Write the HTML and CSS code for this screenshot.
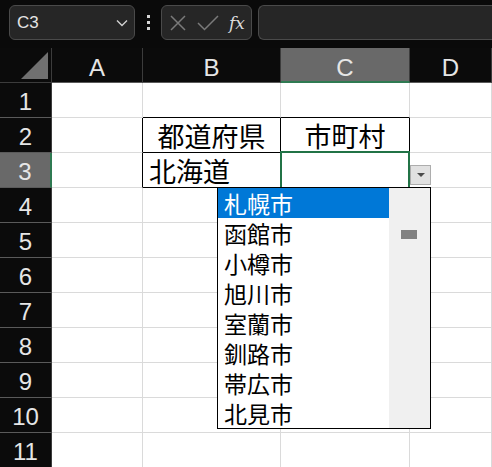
FILE: index.html
```html
<!DOCTYPE html>
<html lang="ja">
<head>
    <meta charset="UTF-8">
    <title>Book1 - Excel</title>
    <link rel="stylesheet" href="styles.css">
</head>
<body>
    <div class="app">
        <!-- name box + formula bar -->
        <div class="toolbar">
            <div class="name-box">
                <span>C3</span>
                <svg class="chevron" width="12" height="8" viewBox="0 0 12 8"><path d="M1 1.5 L6 6.5 L11 1.5" fill="none" stroke="#d0d0d0" stroke-width="1.4"/></svg>
            </div>
            <div class="kebab"><i></i><i></i><i></i></div>
            <div class="fx-buttons">
                <svg width="18" height="18" viewBox="0 0 18 18"><path d="M2 2 L16 16 M16 2 L2 16" stroke="#7a7a7a" stroke-width="1.5"/></svg>
                <svg width="22" height="18" viewBox="0 0 22 18"><path d="M1 9 L7.5 15.5 L21 2" fill="none" stroke="#7a7a7a" stroke-width="1.5"/></svg>
                <span class="fx">fx</span>
            </div>
            <div class="formula-input"></div>
        </div>

        <!-- sheet grid -->
        <div class="sheet">
            <div class="corner"><svg width="28" height="27" viewBox="0 0 28 27"><path d="M27 0 L27 27 L0 27 Z" fill="#707070"/></svg></div>
            <div class="col-head">A</div>
            <div class="col-head">B</div>
            <div class="col-head active">C</div>
            <div class="col-head">D</div>

            <div class="row-head">1</div>
            <div class="cell"></div>
            <div class="cell edge-bottom"></div>
            <div class="cell edge-bottom"></div>
            <div class="cell"></div>

            <div class="row-head">2</div>
            <div class="cell edge-right"></div>
            <div class="cell boxed center">都道府県</div>
            <div class="cell boxed center">市町村</div>
            <div class="cell"></div>

            <div class="row-head active">3</div>
            <div class="cell edge-right"></div>
            <div class="cell boxed">北海道</div>
            <div class="cell boxed selected"></div>
            <div class="cell"></div>

            <div class="row-head">4</div>
            <div class="cell"></div><div class="cell"></div><div class="cell"></div><div class="cell"></div>
            <div class="row-head">5</div>
            <div class="cell"></div><div class="cell"></div><div class="cell"></div><div class="cell"></div>
            <div class="row-head">6</div>
            <div class="cell"></div><div class="cell"></div><div class="cell"></div><div class="cell"></div>
            <div class="row-head">7</div>
            <div class="cell"></div><div class="cell"></div><div class="cell"></div><div class="cell"></div>
            <div class="row-head">8</div>
            <div class="cell"></div><div class="cell"></div><div class="cell"></div><div class="cell"></div>
            <div class="row-head">9</div>
            <div class="cell"></div><div class="cell"></div><div class="cell"></div><div class="cell"></div>
            <div class="row-head">10</div>
            <div class="cell"></div><div class="cell"></div><div class="cell"></div><div class="cell"></div>
            <div class="row-head">11</div>
            <div class="cell"></div><div class="cell"></div><div class="cell"></div><div class="cell"></div>
        </div>

        <!-- data validation dropdown -->
        <div class="dd-button"><i></i></div>
        <div class="dd-list">
            <ul class="dd-items">
                <li class="picked">札幌市</li>
                <li>函館市</li>
                <li>小樽市</li>
                <li>旭川市</li>
                <li>室蘭市</li>
                <li>釧路市</li>
                <li>帯広市</li>
                <li>北見市</li>
            </ul>
            <div class="dd-scroll"><div class="thumb"></div></div>
        </div>
    </div>
</body>
</html>
```

FILE: styles.css
```css
body {
    margin: 0;
    background: #0a0a0a;
    font-family: "Liberation Sans", Arial, sans-serif;
    overflow: hidden;
}
.app {
    position: relative;
    width: 492px;
    height: 467px;
    overflow: hidden;
}

/* top bar */
.toolbar {
    height: 48px;
    box-sizing: border-box;
    padding: 5px 0 0 9px;
    display: flex;
    align-items: flex-start;
}
.name-box {
    width: 126px;
    height: 35px;
    box-sizing: border-box;
    border: 1px solid #4a4a4a;
    border-radius: 6px;
    background: #262626;
    display: flex;
    align-items: center;
    justify-content: space-between;
    padding: 0 6px 0 7px;
    color: #e4e4e4;
    font-size: 17px;
}
.kebab {
    width: 26px;
    height: 35px;
    display: flex;
    flex-direction: column;
    align-items: center;
    justify-content: center;
    gap: 3px;
}
.kebab i {
    width: 3px;
    height: 3px;
    background: #d6d6d6;
}
.fx-buttons {
    width: 91px;
    height: 35px;
    box-sizing: border-box;
    border: 1px solid #4a4a4a;
    border-radius: 6px;
    background: #262626;
    display: flex;
    align-items: center;
    gap: 10px;
    padding-left: 7px;
}
.fx {
    font-family: "DejaVu Serif", "Liberation Serif", serif;
    font-style: italic;
    font-size: 17px;
    color: #dcdcdc;
}
.formula-input {
    flex: 1;
    height: 35px;
    margin-left: 6px;
    box-sizing: border-box;
    border: 1px solid #4a4a4a;
    border-right: none;
    border-radius: 6px 0 0 6px;
    background: #262626;
}

/* grid */
.sheet {
    display: grid;
    grid-template-columns: 52px 91px 138px 129px 1fr;
    grid-auto-rows: 35px;
}
.sheet > div {
    box-sizing: border-box;
}
.corner {
    background: #0b0b0b;
    border-right: 1px solid #3c3c3c;
    border-bottom: 1px solid #3c3c3c;
    display: flex;
    align-items: flex-end;
    justify-content: flex-end;
    padding: 0 2px 3px 0;
}
.col-head,
.row-head {
    background: #0b0b0b;
    color: #e6e6e6;
    font-size: 24px;
    line-height: 1;
    display: flex;
    align-items: center;
    justify-content: center;
    border-right: 1px solid #3c3c3c;
    border-bottom: 1px solid #5a5a5a;
}
.col-head {
    padding-top: 6px;
}
.row-head {
    padding-top: 3px;
}
.col-head.active {
    background: #696969;
    border-bottom: 2px solid #2f7a52;
}
.row-head.active {
    background: #696969;
    border-right: 2px solid #2f7a52;
}
.cell {
    background: #fff;
    border-right: 1px solid #dadada;
    border-bottom: 1px solid #dadada;
    font-family: "Noto Sans CJK JP", sans-serif;
    font-size: 27px;
    line-height: 1;
    color: #000;
    display: flex;
    align-items: center;
    padding-left: 6px;
    white-space: nowrap;
}
.cell.center {
    justify-content: center;
    padding-left: 0;
}
.cell.boxed {
    border-right-color: #000;
    border-bottom-color: #000;
}
.cell.edge-bottom {
    border-bottom-color: #000;
}
.cell.edge-right {
    border-right-color: #000;
}
.cell.selected {
    position: relative;
}
.cell.selected::after {
    content: "";
    position: absolute;
    left: -1px;
    top: -2px;
    right: -1px;
    bottom: -2px;
    border: 2px solid #217346;
}

/* dropdown */
.dd-button {
    position: absolute;
    left: 410px;
    top: 165px;
    width: 21px;
    height: 20px;
    box-sizing: border-box;
    background: #e1e1e1;
    border: 1px solid #adadad;
    display: flex;
    align-items: center;
    justify-content: center;
}
.dd-button i {
    width: 0;
    height: 0;
    border-left: 4px solid transparent;
    border-right: 4px solid transparent;
    border-top: 4px solid #4a4a4a;
}
.dd-list {
    position: absolute;
    left: 217px;
    top: 187px;
    width: 214px;
    height: 242px;
    box-sizing: border-box;
    border: 1px solid #000;
    background: #fff;
    display: flex;
}
.dd-items {
    list-style: none;
    margin: 0;
    padding: 0;
    width: 171px;
}
.dd-items li {
    height: 30px;
    display: flex;
    align-items: center;
    line-height: 1;
    padding-left: 6px;
    font-family: "Noto Sans CJK JP", sans-serif;
    font-size: 23px;
    color: #000;
}
.dd-items li.picked {
    background: #0078d7;
    color: #fff;
}
.dd-scroll {
    flex: 1;
    background: #f0f0f0;
    padding: 42px 0 0 12px;
}
.thumb {
    width: 16px;
    height: 9px;
    background: #818181;
}
```
